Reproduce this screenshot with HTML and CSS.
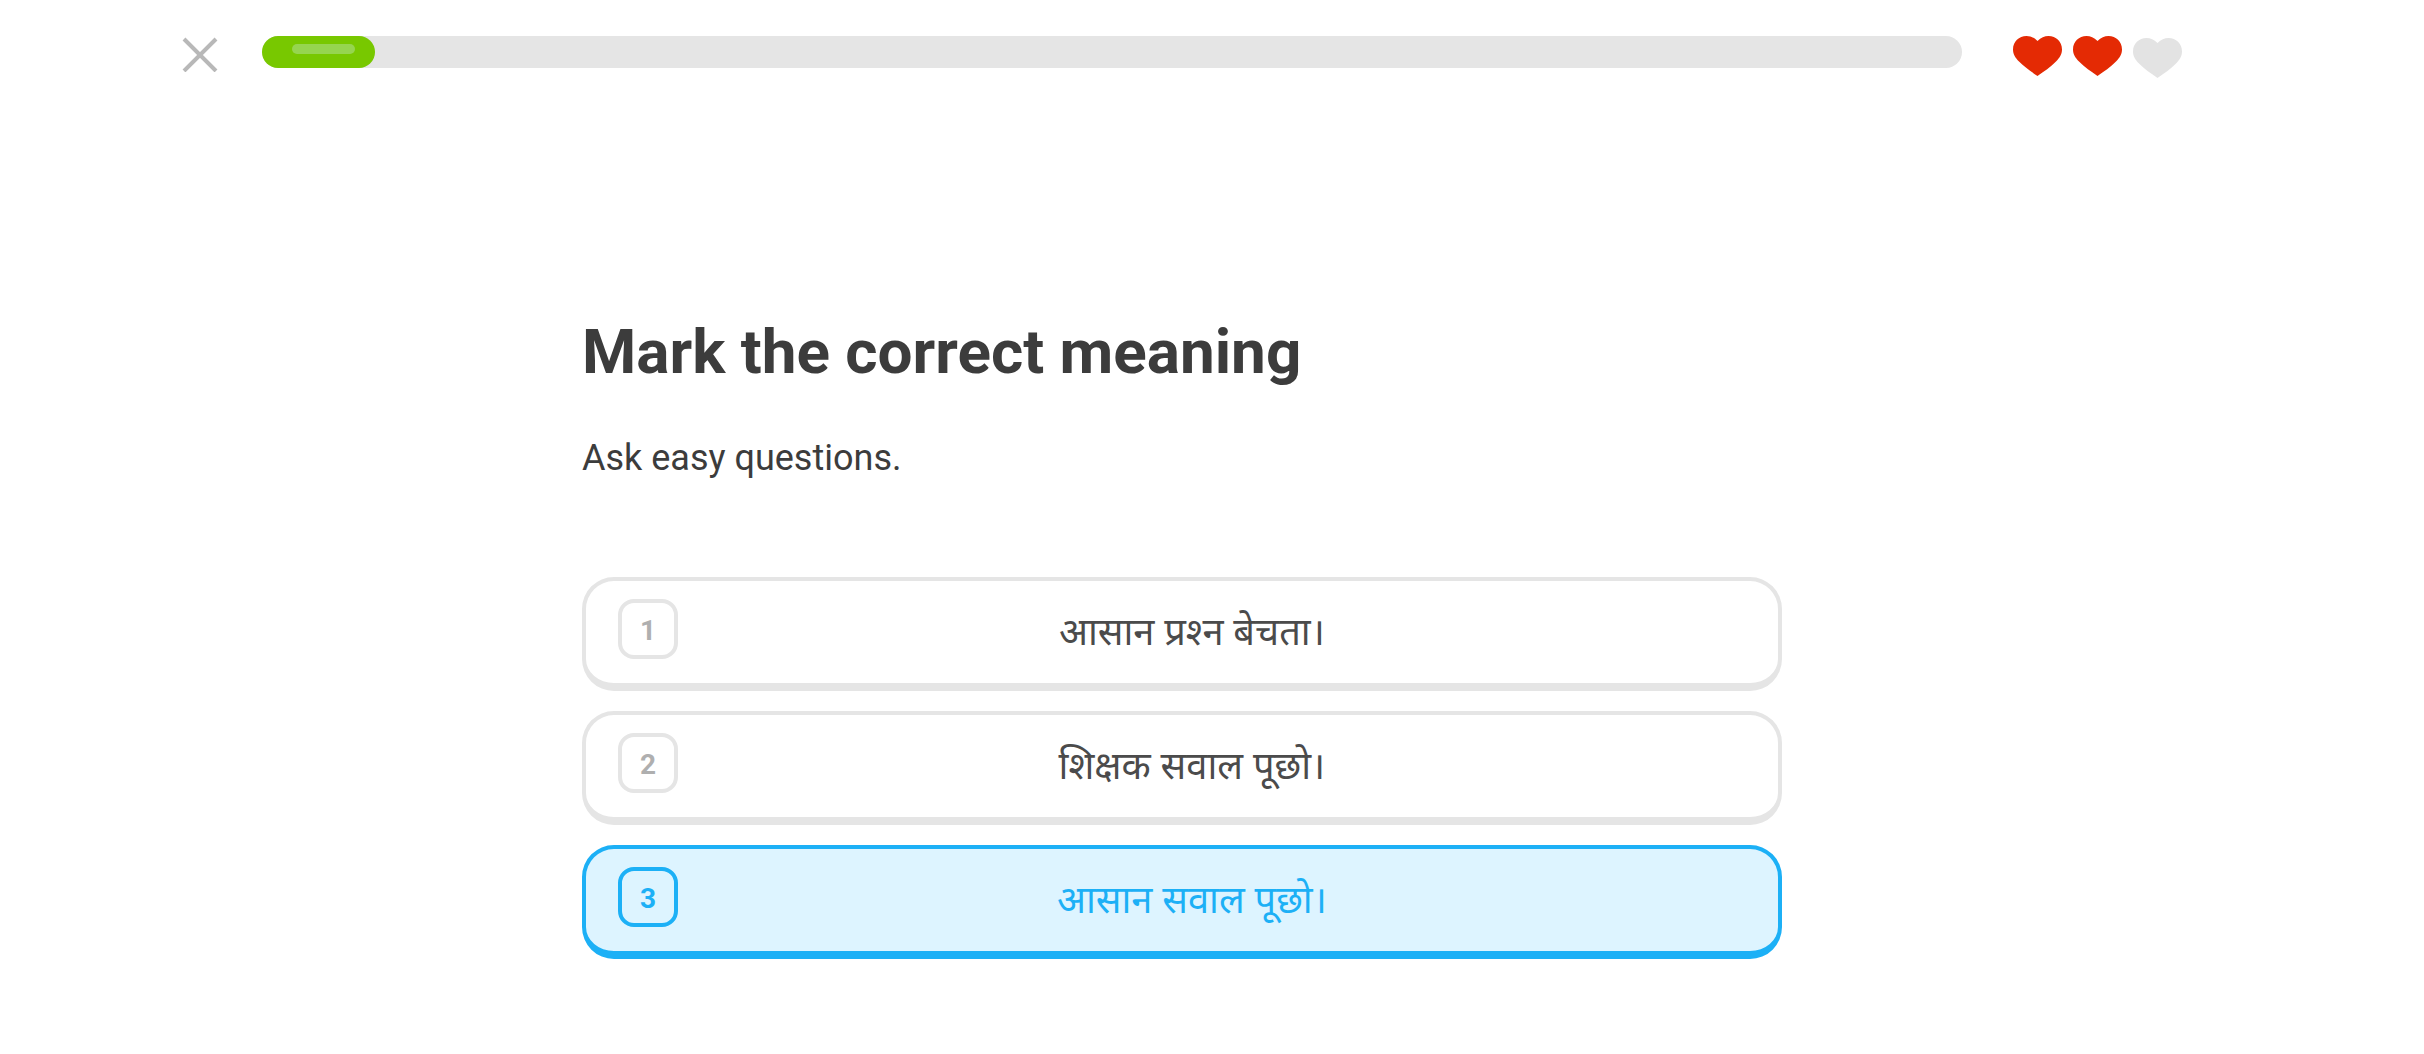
FILE: index.html
```
<!DOCTYPE html>
<html lang="en">
<head>
    <meta charset="UTF-8">
    <meta name="viewport" content="width=device-width, initial-scale=1.0">
    <title>Lesson</title>
    <link rel="stylesheet" href="styles.css">
</head>
<body>
    <header class="lesson-header">
        <button type="button" class="close-btn" aria-label="Quit lesson">
            <svg viewBox="0 0 36 36" width="36" height="36" aria-hidden="true">
                <path d="M2 3L34 35M34 3L2 35" stroke="#b8b8b8" stroke-width="4" fill="none"/>
            </svg>
        </button>

        <div class="progress" role="progressbar" aria-label="Lesson progress" aria-valuemin="0" aria-valuemax="15" aria-valuenow="1">
            <div class="progress-fill">
                <div class="progress-shine"></div>
            </div>
        </div>

        <div class="hearts" role="img" aria-label="2 of 3 hearts left">
            <svg class="heart" viewBox="0 0 49 40"><path d="M24.500 5C21 1.500 17.500 0 13.500 0C6 0 0 5.500 0 13.500C0 18.500 2.500 22 6 25.500C11.500 31 18 35.500 24.500 40C31 35.500 37.500 31 43 25.500C46.500 22 49 18.500 49 13.500C49 5.500 43 0 35.500 0C31.500 0 28 1.500 24.500 5Z"/></svg>
            <svg class="heart" viewBox="0 0 49 40"><path d="M24.500 5C21 1.500 17.500 0 13.500 0C6 0 0 5.500 0 13.500C0 18.500 2.500 22 6 25.500C11.500 31 18 35.500 24.500 40C31 35.500 37.500 31 43 25.500C46.500 22 49 18.500 49 13.500C49 5.500 43 0 35.500 0C31.500 0 28 1.500 24.500 5Z"/></svg>
            <svg class="heart heart-empty" viewBox="0 0 49 40"><path d="M24.500 5C21 1.500 17.500 0 13.500 0C6 0 0 5.500 0 13.500C0 18.500 2.500 22 6 25.500C11.500 31 18 35.500 24.500 40C31 35.500 37.500 31 43 25.500C46.500 22 49 18.500 49 13.500C49 5.500 43 0 35.500 0C31.500 0 28 1.500 24.500 5Z"/></svg>
        </div>
    </header>

    <main class="challenge">
        <h1>Mark the correct meaning</h1>
        <p class="prompt">Ask easy questions.</p>

        <form class="choices">
            <label class="choice">
                <input type="radio" name="answer" value="1">
                <span class="choice-number">1</span>
                <span class="choice-text" lang="hi">आसान प्रश्&zwj;न बेचता।</span>
            </label>
            <label class="choice">
                <input type="radio" name="answer" value="2">
                <span class="choice-number">2</span>
                <span class="choice-text" lang="hi">शिक्षक सवाल पूछो।</span>
            </label>
            <label class="choice">
                <input type="radio" name="answer" value="3" checked>
                <span class="choice-number">3</span>
                <span class="choice-text" lang="hi">आसान सवाल पूछो।</span>
            </label>
        </form>
    </main>
</body>
</html>
```
FILE: styles.css
```
* {
    box-sizing: border-box;
}
body {
    margin: 0;
    padding: 36px 60px 60px 0;
    background: #fff;
    color: #3c3c3c;
    font-family: Roboto, "Noto Sans", sans-serif;
}

/* Top bar */
.lesson-header {
    display: flex;
    align-items: flex-start;
    max-width: 2000px;
    margin: 0 auto;
}
.close-btn {
    display: flex;
    margin-right: 44px;
    padding: 0;
    border: none;
    background: none;
    cursor: pointer;
}
.progress {
    flex: 1;
    height: 32px;
    border-radius: 16px;
    background: #e5e5e5;
}
.progress-fill {
    width: 113px;
    height: 32px;
    padding: 8px 20px 0 30px;
    border-radius: 16px;
    background: #78c800;
}
.progress-shine {
    height: 10px;
    border-radius: 5px;
    background: #96d54f;
}
.hearts {
    display: flex;
    gap: 11px;
    margin-left: 51px;
}
.heart {
    width: 49px;
    height: 40px;
    fill: #e42a04;
}
.heart-empty {
    margin-top: 2px;
    fill: #e3e3e3;
}

/* Question */
.challenge {
    max-width: 1200px;
    margin: 0 auto;
    padding-top: 236px;
}
h1 {
    margin: 0;
    font-size: 62px;
    font-weight: 700;
    line-height: 76px;
}
.prompt {
    margin: 44px 0 0;
    font-size: 36px;
    line-height: 48px;
}

/* Answers */
.choices {
    display: flex;
    flex-direction: column;
    gap: 20px;
    margin-top: 95px;
}
.choice {
    position: relative;
    display: flex;
    align-items: flex-start;
    padding: 18px 32px 22px;
    border: 4px solid #e5e5e5;
    border-bottom-width: 8px;
    border-radius: 32px;
    color: #4b4b4b;
    cursor: pointer;
}
.choice input {
    position: absolute;
    opacity: 0;
}
.choice-number {
    flex: none;
    width: 60px;
    height: 60px;
    border: 4px solid #e5e5e5;
    border-radius: 16px;
    color: #afafaf;
    font-size: 28px;
    font-weight: 700;
    line-height: 56px;
    text-align: center;
}
.choice-text {
    flex: 1;
    padding-right: 40px;
    font-family: "Noto Sans", "Noto Sans Devanagari", sans-serif;
    font-size: 38px;
    line-height: 62px;
    text-align: center;
}
.choice:has(input:checked) {
    border-color: #1cb0f6;
    background: #ddf4ff;
    color: #1cb0f6;
}
.choice input:checked + .choice-number {
    border-color: #1cb0f6;
    color: #1cb0f6;
}
```
